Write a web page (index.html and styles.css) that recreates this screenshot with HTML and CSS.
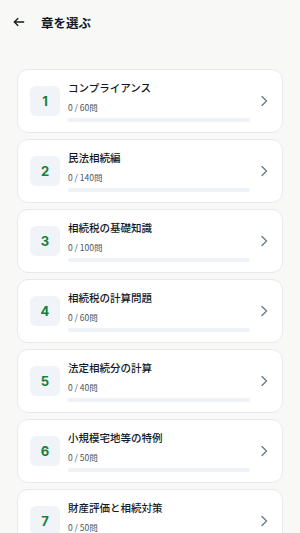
FILE: index.html
```html
<!DOCTYPE html>
<html lang="ja">
<head>
  <meta charset="UTF-8">
  <title>章を選ぶ</title>
  <meta name="viewport" content="width=device-width, initial-scale=1.0">
  <link rel="stylesheet" href="styles.css">
</head>
<body>

<header class="topbar">
  <svg class="back" width="14" height="14" viewBox="0 0 24 24" fill="none" stroke="#111827" stroke-width="2.2" stroke-linecap="round" stroke-linejoin="round">
    <path d="M20 12H4"/>
    <path d="M10 6l-6 6 6 6"/>
  </svg>
  <h1>章を選ぶ</h1>
</header>

<div class="list">
  <div class="chapter">
    <div class="num">1</div>
    <div class="info">
      <div class="title">コンプライアンス</div>
      <div class="count">0 / 60問</div>
      <div class="bar"></div>
    </div>
    <svg class="chev" width="8" height="12" viewBox="0 0 8 12" fill="none" stroke="#6b7a90" stroke-width="1.4" stroke-linecap="round" stroke-linejoin="round"><path d="M2 1.5l4.5 4.5L2 10.5"/></svg>
  </div>
  <div class="chapter">
    <div class="num">2</div>
    <div class="info">
      <div class="title">民法相続編</div>
      <div class="count">0 / 140問</div>
      <div class="bar"></div>
    </div>
    <svg class="chev" width="8" height="12" viewBox="0 0 8 12" fill="none" stroke="#6b7a90" stroke-width="1.4" stroke-linecap="round" stroke-linejoin="round"><path d="M2 1.5l4.5 4.5L2 10.5"/></svg>
  </div>
  <div class="chapter">
    <div class="num">3</div>
    <div class="info">
      <div class="title">相続税の基礎知識</div>
      <div class="count">0 / 100問</div>
      <div class="bar"></div>
    </div>
    <svg class="chev" width="8" height="12" viewBox="0 0 8 12" fill="none" stroke="#6b7a90" stroke-width="1.4" stroke-linecap="round" stroke-linejoin="round"><path d="M2 1.5l4.5 4.5L2 10.5"/></svg>
  </div>
  <div class="chapter">
    <div class="num">4</div>
    <div class="info">
      <div class="title">相続税の計算問題</div>
      <div class="count">0 / 60問</div>
      <div class="bar"></div>
    </div>
    <svg class="chev" width="8" height="12" viewBox="0 0 8 12" fill="none" stroke="#6b7a90" stroke-width="1.4" stroke-linecap="round" stroke-linejoin="round"><path d="M2 1.5l4.5 4.5L2 10.5"/></svg>
  </div>
  <div class="chapter">
    <div class="num">5</div>
    <div class="info">
      <div class="title">法定相続分の計算</div>
      <div class="count">0 / 40問</div>
      <div class="bar"></div>
    </div>
    <svg class="chev" width="8" height="12" viewBox="0 0 8 12" fill="none" stroke="#6b7a90" stroke-width="1.4" stroke-linecap="round" stroke-linejoin="round"><path d="M2 1.5l4.5 4.5L2 10.5"/></svg>
  </div>
  <div class="chapter">
    <div class="num">6</div>
    <div class="info">
      <div class="title">小規模宅地等の特例</div>
      <div class="count">0 / 50問</div>
      <div class="bar"></div>
    </div>
    <svg class="chev" width="8" height="12" viewBox="0 0 8 12" fill="none" stroke="#6b7a90" stroke-width="1.4" stroke-linecap="round" stroke-linejoin="round"><path d="M2 1.5l4.5 4.5L2 10.5"/></svg>
  </div>
  <div class="chapter">
    <div class="num">7</div>
    <div class="info">
      <div class="title">財産評価と相続対策</div>
      <div class="count">0 / 50問</div>
      <div class="bar"></div>
    </div>
    <svg class="chev" width="8" height="12" viewBox="0 0 8 12" fill="none" stroke="#6b7a90" stroke-width="1.4" stroke-linecap="round" stroke-linejoin="round"><path d="M2 1.5l4.5 4.5L2 10.5"/></svg>
  </div>
</div>

</body>
</html>
```

FILE: styles.css
```css
body {
  font-family: "Noto Sans CJK JP", "Noto Sans", sans-serif;
  margin: 0;
  padding: 0;
  background-color: #f8f8f7;
  color: #111827;
}

.topbar {
  display: flex;
  align-items: center;
  height: 44px;
  padding: 0 12px;
}

.topbar .back {
  margin-right: 15px;
}

.topbar h1 {
  font-size: 12.5px;
  font-weight: 700;
  margin: 0;
}

.list {
  padding: 25px 17px 0;
  display: flex;
  flex-direction: column;
  gap: 6px;
}

.chapter {
  display: flex;
  align-items: center;
  height: 64px;
  box-sizing: border-box;
  padding: 0 14px 0 12px;
  background: #fff;
  border: 1px solid #e6e9ef;
  border-radius: 11px;
}

.num {
  width: 30px;
  height: 30px;
  flex-shrink: 0;
  border-radius: 6px;
  background: #f0f3f7;
  color: #15803d;
  font-family: "Inter", sans-serif;
  font-weight: 700;
  font-size: 13px;
  display: flex;
  align-items: center;
  justify-content: center;
  margin-right: 8px;
}

.info {
  flex: 1;
  padding-top: 1px;
}

.title {
  font-size: 10.5px;
  font-weight: 500;
  line-height: 14px;
  color: #111827;
}

.count {
  font-size: 8.5px;
  line-height: 12px;
  margin-top: 6px;
  color: #4b5563;
}

.bar {
  height: 4px;
  border-radius: 2px;
  background: #eef1f6;
  margin-top: 5px;
}

.chev {
  flex-shrink: 0;
  margin-left: 10px;
}
```
